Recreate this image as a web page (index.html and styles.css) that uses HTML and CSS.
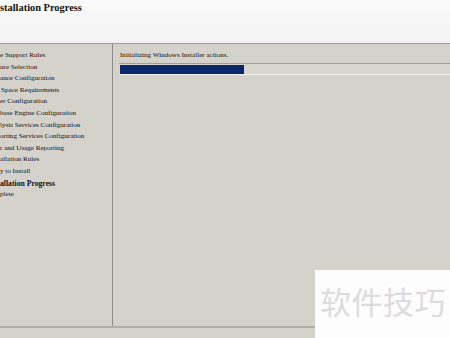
FILE: index.html
```html
<!DOCTYPE html>
<html lang="en">
<head>
  <meta charset="UTF-8" />
  <title>Installation Progress</title>
  <link rel="stylesheet" href="styles.css">
</head>
<body>
  <div class="window">
    <div class="header">
      <h1>stallation Progress</h1>
    </div>

    <div class="main">
      <ul class="steps">
        <li>e Support Rules</li>
        <li>ure Selection</li>
        <li>ance Configuration</li>
        <li class="indent">Space Requirements</li>
        <li>er Configuration</li>
        <li>base Engine Configuration</li>
        <li>lysis Services Configuration</li>
        <li>orting Services Configuration</li>
        <li>r and Usage Reporting</li>
        <li>allation Rules</li>
        <li>y to Install</li>
        <li class="current">allation Progress</li>
        <li>plete</li>
      </ul>

      <div class="content">
        <div class="status">Initializing Windows Installer actions.</div>
        <div class="progress">
          <div class="progress-fill" style="width: 124px;"></div>
        </div>
      </div>
    </div>

    <div class="bottom"></div>
  </div>

  <div class="watermark">软件技巧</div>
</body>
</html>
```

FILE: styles.css
```css
body {
  margin: 0;
  background: #d5d2cc;
  font-family: "Liberation Serif", "Times New Roman", serif;
  color: #111;
  overflow: hidden;
}
.window {
  width: 450px;
  height: 338px;
  display: flex;
  flex-direction: column;
}
.header {
  height: 43px;
  flex: none;
  background: linear-gradient(to bottom, #fafafa, #f3f3f3);
  border-bottom: 1px solid #9e9e9e;
}
h1 {
  margin: 0;
  padding-top: 2px;
  font-size: 10.4px;
  line-height: 11px;
  font-weight: bold;
  color: #141414;
}
.main {
  display: flex;
  height: 282px;
  flex: none;
}
.steps {
  list-style: none;
  margin: 0;
  padding: 6px 0 0 0;
  width: 112px;
  border-right: 1px solid #8e8c88;
  font-size: 7.1px;
  line-height: 11.6px;
  color: #111;
}
.steps li {
  white-space: nowrap;
}
.steps .indent {
  padding-left: 1px;
}
.steps .current {
  font-weight: bold;
  font-size: 7.7px;
}
.content {
  flex: 1;
  padding-top: 6px;
}
.status {
  font-size: 7.1px;
  line-height: 11.6px;
  padding-left: 7px;
  color: #111;
}
.progress {
  margin: 1px 0 0 6px;
  height: 10px;
  border-top: 1px solid #a19e98;
  border-bottom: 1px solid #f2f1ee;
  background: #d8d5cf;
  display: flex;
  align-items: stretch;
}
.progress-fill {
  background: #0c266b;
  margin: 1px 0 0 1px;
}
.bottom {
  flex: 1;
  border-top: 2px solid #b1aea8;
}
.watermark {
  position: absolute;
  left: 315px;
  top: 270px;
  width: 135px;
  height: 68px;
  background: #fdfdfd;
  font-family: "Noto Sans CJK SC", sans-serif;
  font-size: 31px;
  line-height: 62px;
  color: #dcdcdc;
  padding-left: 5px;
  box-sizing: border-box;
  letter-spacing: 0.5px;
}
```
